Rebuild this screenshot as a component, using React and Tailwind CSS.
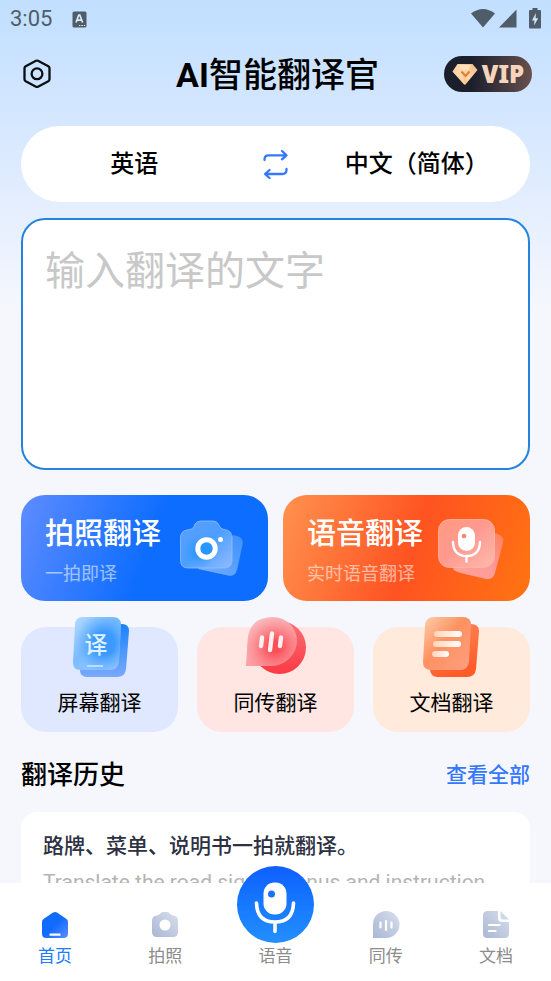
import React, { useState } from 'react';

// Status bar at the top of the screen
const StatusBar = () => (
  <div className="flex h-9 items-center justify-between px-[10px] pt-[2px] text-[#4f5d6b]">
    <div className="flex items-center gap-5">
      <span className="font-[Roboto] text-[22px] leading-8">3:05</span>
      <svg width="15" height="17" viewBox="0 0 15 17" aria-hidden="true">
        <rect x="0.5" y="0.5" width="14" height="16" rx="1.5" fill="#4f5d6b" />
        <path d="M4 11.5 6.8 4h1L10.6 11.5M5 9.2h4.700" fill="none" stroke="#dcebfa" strokeWidth="1.7" />
        <path d="M7 14.5h1.400M9.400 14.500h1.400M11.800 14.500h1.400" stroke="#dcebfa" strokeWidth="1.2" />
      </svg>
    </div>
    <div className="flex items-center pb-[2px]">
      <svg width="24" height="19" viewBox="0 0 24 19" aria-hidden="true">
        <path d="M0 4.5Q12-4.500 24 4.500L12 18.500Z" fill="#4f5d6b" />
      </svg>
      <svg className="ml-1" width="18" height="19" viewBox="0 0 18 19" aria-hidden="true">
        <path d="M17.5.5V18.500H0Z" fill="#4f5d6b" />
      </svg>
      <svg className="ml-3" width="12" height="21" viewBox="0 0 12 21" aria-hidden="true">
        <path d="M3.500 0h5v2H11a1 1 0 0 1 1 1v16.500a1 1 0 0 1-1 1H1a1 1 0 0 1-1-1V3a1 1 0 0 1 1-1h2.500Z" fill="#4f5d6b" />
        <path d="M7 5 3 12.500h2.500L5 17.500l4.200-7.200H6.500Z" fill="#d4e8fc" />
      </svg>
    </div>
  </div>
);

const SettingsIcon = () => (
  <svg width="30" height="30" viewBox="0 0 30 30" fill="none" stroke="#0b0f14" strokeWidth="2.3" strokeLinejoin="round" aria-hidden="true">
    <path d="M13 1.800Q14 1.400 15 1.800L25.300 7.200Q26.500 8 26.500 9.300V20.300Q26.500 21.600 25.300 22.300L15 27.700Q14 28.100 13 27.700L2.700 22.300Q1.500 21.600 1.500 20.300V9.300Q1.500 8 2.700 7.200Z" />
    <circle cx="14" cy="14.8" r="5.4" />
  </svg>
);

const DiamondIcon = () => (
  <svg width="26" height="22" viewBox="0 0 26 22" aria-hidden="true">
    <defs>
      <linearGradient id="gem" x1="0" y1="1" x2="1" y2="0">
        <stop offset="0" stopColor="#f8a866" />
        <stop offset="0.5" stopColor="#ffd8aa" />
        <stop offset="1" stopColor="#f9b682" />
      </linearGradient>
    </defs>
    <path d="M5.500 1h15L25.500 7 13.500 21.500Q12.500 22 11.500 21L.5 8.500Z" fill="url(#gem)" />
    <path d="M7 2h12l-2.500 5h-7Z" fill="#ffe6c8" opacity="0.8" />
    <path d="M.5 8.500 9 8 13 21.500Z" fill="#ffe0bb" opacity="0.6" />
    <path d="m9.500 8.500 4 4.500 4-4.500" fill="none" stroke="#e57b2c" strokeWidth="2" />
  </svg>
);

const SwapIcon = () => (
  <svg width="26" height="30" viewBox="0 0 26 30" fill="none" stroke="#3478ff" strokeWidth="2.3" strokeLinecap="round" strokeLinejoin="round" aria-hidden="true">
    <path d="M1.500 11V10.500Q1.500 6.300 5.500 6.300H23M19 2l4.500 4.300-4.500 4" />
    <path d="M23.500 20v.5Q23.500 25 19.500 25H2.500M6.500 21 2 25l4.500 4" />
  </svg>
);

const CameraArt = () => (
  <svg width="64" height="60" viewBox="0 0 64 60" aria-hidden="true">
    <defs>
      <linearGradient id="camBack" x1="0" y1="1" x2="1" y2="0">
        <stop offset="0" stopColor="#78b0ff" />
        <stop offset="1" stopColor="#3c91ff" />
      </linearGradient>
      <linearGradient id="camBody" x1="0" y1="0" x2="1" y2="1">
        <stop offset="0" stopColor="#5b9eff" />
        <stop offset="0.5" stopColor="#4b9fff" />
        <stop offset="1" stopColor="#91bbff" />
      </linearGradient>
      <radialGradient id="camGlow">
        <stop offset="0" stopColor="#1e8fff" />
        <stop offset="1" stopColor="#3b9aff" stopOpacity="0" />
      </radialGradient>
    </defs>
    <path d="M18 49 53 15 57 16Q64 18 62.500 25L57 50Q55 57 48 55.500Z" fill="url(#camBack)" />
    <path d="M7 10Q12 9.500 13.500 7.500L15 4Q17 1 21 1H33Q37 1 39 5 40 9 44 9.500 52 10 52 18V40Q52 48 44 48H8Q.5 48 .5 40V18Q.5 11 7 10Z" fill="url(#camBody)" stroke="#94bfff" strokeWidth="0.8" />
    <circle cx="20" cy="31" r="17" fill="url(#camGlow)" />
    <circle cx="26.5" cy="28.500" r="8.700" fill="#2997ff" stroke="#fff" strokeWidth="5" />
    <circle cx="40.5" cy="19.500" r="2.500" fill="#fff" />
  </svg>
);

const VoiceArt = () => (
  <svg width="68" height="62" viewBox="0 0 68 62" aria-hidden="true">
    <defs>
      <linearGradient id="voiceBack" x1="0" y1="1" x2="1" y2="0">
        <stop offset="0" stopColor="#ffa49a" />
        <stop offset="0.5" stopColor="#ff9a98" />
        <stop offset="1" stopColor="#ff815c" />
      </linearGradient>
      <linearGradient id="voiceBody" x1="0" y1="0" x2="1" y2="1">
        <stop offset="0" stopColor="#ff9a80" />
        <stop offset="0.45" stopColor="#ff9990" />
        <stop offset="1" stopColor="#ffbaab" />
      </linearGradient>
    </defs>
    <path d="M15 50 56 14 60 15Q67 18 65 24L57 54Q55 61 48 60L23 54Q16 52 15 50Z" fill="url(#voiceBack)" />
    <rect x="0.5" y="0.5" width="56" height="48" rx="11" fill="url(#voiceBody)" stroke="#ffb7a5" strokeWidth="0.8" />
    <rect x="20" y="8" width="17" height="24" rx="8.5" fill="#fff" />
    <circle cx="26" cy="17" r="2.300" fill="#ff8176" />
    <path d="M15 23Q15.500 37 28.500 37 41.500 37 42 23M28.500 37V42.500" fill="none" stroke="#fff" strokeWidth="2.400" strokeLinecap="round" />
  </svg>
);

const ScreenArt = () => (
  <svg width="58" height="62" viewBox="0 0 58 62" aria-hidden="true">
    <defs>
      <linearGradient id="scrBack" x1="0" y1="0" x2="0" y2="1">
        <stop offset="0" stopColor="#1a83fb" />
        <stop offset="1" stopColor="#78a9ff" />
      </linearGradient>
      <linearGradient id="scrFront" x1="0" y1="0" x2="0.8" y2="1">
        <stop offset="0" stopColor="#b4dcff" />
        <stop offset="0.5" stopColor="#7cbcff" />
        <stop offset="1" stopColor="#9cc8ff" />
      </linearGradient>
      <radialGradient id="scrGlow" cx="0.65" cy="0.5" r="0.6">
        <stop offset="0.35" stopColor="#3b99ff" />
        <stop offset="1" stopColor="#5cacff" stopOpacity="0" />
      </radialGradient>
    </defs>
    <path d="M17 8H51Q58 8 58 15L55 53Q54 61 46 61H16Q9 61 9 54Z" fill="url(#scrBack)" />
    <path d="M12 1H42Q50 1 50 9L48 45Q47 54 39 54H9Q2 54 2 46L4 9Q4 1 12 1Z" fill="url(#scrFront)" />
    <path d="M12 1H42Q50 1 50 9L48 45Q47 54 39 54H9Q2 54 2 46L4 9Q4 1 12 1Z" fill="url(#scrGlow)" />
    <text x="13.5" y="36.5" fontSize="23" fontWeight="500" fontFamily="'Noto Sans CJK SC', sans-serif" fill="#dff2ff">译</text>
    <path d="M16 50H32" stroke="#b8dfff" strokeWidth="2" />
  </svg>
);

const BubbleArt = () => (
  <svg width="62" height="60" viewBox="0 0 62 60" aria-hidden="true">
    <defs>
      <linearGradient id="bubBack" x1="0" y1="0" x2="0" y2="1">
        <stop offset="0" stopColor="#fb7077" />
        <stop offset="1" stopColor="#fa3a43" />
      </linearGradient>
      <linearGradient id="bubFront" x1="0" y1="0" x2="0.6" y2="1">
        <stop offset="0" stopColor="#f8c1c5" />
        <stop offset="1" stopColor="#fb9499" />
      </linearGradient>
      <radialGradient id="bubGlow" cx="0.56" cy="0.6" r="0.6">
        <stop offset="0.2" stopColor="#fb4f58" />
        <stop offset="1" stopColor="#fc7f87" stopOpacity="0" />
      </radialGradient>
    </defs>
    <circle cx="34.5" cy="31.5" r="26.5" fill="url(#bubBack)" />
    <path d="M1 50 2.500 25Q4 1 28 1A24 24 0 0 1 52 24 26 26 0 0 1 25 50Z" fill="url(#bubFront)" />
    <path d="M1 50 2.500 25Q4 1 28 1A24 24 0 0 1 52 24 26 26 0 0 1 25 50Z" fill="url(#bubGlow)" />
    <path d="m17 21.500-1 8.500M27 17.500l-2 16.500M36 21.500l-1 8.500" stroke="#ffeff0" strokeWidth="4.4" strokeLinecap="round" />
  </svg>
);

const DocumentArt = () => (
  <svg width="58" height="62" viewBox="0 0 58 62" aria-hidden="true">
    <defs>
      <linearGradient id="docBack" x1="0" y1="0" x2="0.4" y2="1">
        <stop offset="0" stopColor="#fd8d62" />
        <stop offset="1" stopColor="#ff5c28" />
      </linearGradient>
      <linearGradient id="docFront" x1="0" y1="0" x2="1" y2="1">
        <stop offset="0" stopColor="#fbd0ad" />
        <stop offset="0.45" stopColor="#fe9161" />
        <stop offset="1" stopColor="#fd9f81" />
      </linearGradient>
      <linearGradient id="docLine">
        <stop offset="0" stopColor="#ffd4b8" />
        <stop offset="1" stopColor="#fff" />
      </linearGradient>
    </defs>
    <path d="M15 8H48Q56 8 56 15L53 53Q52 61 44 61H14Q7 60 7 53Z" fill="url(#docBack)" />
    <path d="M11 1H40Q48 1 48 9L46 45Q45 54 37 54H8Q0 54 0 46L2 9Q3 1 11 1Z" fill="url(#docFront)" />
    <rect x="11" y="15" width="28" height="6" rx="3" fill="url(#docLine)" />
    <rect x="10" y="25" width="28" height="6" rx="3" fill="url(#docLine)" />
    <rect x="9" y="35" width="17" height="6" rx="3" fill="url(#docLine)" />
  </svg>
);

const HomeIcon = () => (
  <svg width="28" height="28" viewBox="0 0 28 28" aria-hidden="true">
    <defs>
      <linearGradient id="homeFill" x1="0" y1="0" x2="1" y2="1">
        <stop offset="0.5" stopColor="#116bff" />
        <stop offset="1" stopColor="#5c8dff" />
      </linearGradient>
    </defs>
    <path d="M12 1.500Q14 .300 16 1.500L25.500 8Q27 9.200 27 11V22.500Q27 27 22.500 27H5.500Q1 27 1 22.500V11Q1 9.200 2.500 8Z" fill="url(#homeFill)" />
    <rect x="8.5" y="22.500" width="11" height="2.300" rx="0.5" fill="#fff" />
  </svg>
);

// Shared grey gradient for the inactive tabs
const GreyFill = ({ id }) => (
  <defs>
    <linearGradient id={id} x1="0" y1="1" x2="1" y2="0">
      <stop offset="0" stopColor="#a9b7d4" />
      <stop offset="1" stopColor="#d8dfec" />
    </linearGradient>
  </defs>
);

const PhotoIcon = () => (
  <svg width="28" height="28" viewBox="0 0 28 28" aria-hidden="true">
    <GreyFill id="photoFill" />
    <path d="M6 4.500 9 3Q10 1 12 1h4q2 0 3 2l3 1.500q5 .500 5 5V21q0 5-5 5H6q-5 0-5-5V9.500Q1 5 6 4.500Z" fill="url(#photoFill)" />
    <circle cx="14" cy="14" r="5.500" fill="#fff" />
  </svg>
);

const InterpretIcon = () => (
  <svg width="28" height="28" viewBox="0 0 28 28" aria-hidden="true">
    <GreyFill id="interpretFill" />
    <path d="M1 27V13A13 13 0 0 1 14 0 13.300 13.300 0 0 1 14 27Z" fill="url(#interpretFill)" />
    <path d="M8.500 11.500v5M14 10v9M19.500 11.500v5" stroke="#fff" strokeWidth="2.200" strokeLinecap="round" />
  </svg>
);

const FileIcon = () => (
  <svg width="28" height="28" viewBox="0 0 28 28" aria-hidden="true">
    <GreyFill id="fileFill" />
    <path d="M5.500 0H16V7q0 4 4 4h7V22.500Q27 27 22.500 27H5.500Q1 27 1 22.500V4.500Q1 0 5.500 0Z" fill="url(#fileFill)" />
    <path d="M18.500 0 27 8.500H21q-2.500 0-2.500-2.500Z" fill="#cfd8e8" />
    <path d="M7 14h10.500M7 20h6.500" stroke="#fff" strokeWidth="2.200" strokeLinecap="round" />
  </svg>
);

const MicIcon = () => (
  <svg width="76" height="76" viewBox="0 0 76 76" aria-hidden="true">
    <rect x="26.5" y="15.500" width="23" height="32" rx="11" fill="#fff" />
    <circle cx="34.5" cy="27" r="3.500" fill="#1a73ff" />
    <path d="M19.500 36Q20 55 38 55 56 55 56.500 36M38 55V64.500" fill="none" stroke="#fff" strokeWidth="3.600" strokeLinecap="round" />
  </svg>
);

const features = [
  { label: '屏幕翻译', art: <ScreenArt />, color: 'bg-[#e0e8ff]' },
  { label: '同传翻译', art: <BubbleArt />, color: 'bg-[#ffe6e2]' },
  { label: '文档翻译', art: <DocumentArt />, color: 'bg-[#ffeadb]' },
];

const tabs = [
  { label: '首页', icon: <HomeIcon /> },
  { label: '拍照', icon: <PhotoIcon /> },
  { label: '语音', icon: null },
  { label: '同传', icon: <InterpretIcon /> },
  { label: '文档', icon: <FileIcon /> },
];

// Large gradient button with a title, a subtitle and artwork
const ActionCard = ({ title, subtitle, art, className }) => (
  <button type="button" className={`flex h-[106px] flex-1 items-center justify-between rounded-3xl px-6 pt-1 text-left ${className}`}>
    <span className="flex flex-col pt-1">
      <span className="text-[29px] font-medium leading-10 text-white">{title}</span>
      <span className="mt-1 text-lg leading-8 text-white/55">{subtitle}</span>
    </span>
    {art}
  </button>
);

const App = () => {
  const [text, setText] = useState('');
  const [languages, setLanguages] = useState(['英语', '中文（简体）']);
  const [activeTab, setActiveTab] = useState('首页');

  return (
    <div className="flex h-screen flex-col overflow-hidden bg-[#f6f7fd] bg-[linear-gradient(180deg,#c1dfff_0px,#d5e7ff_120px,#f6f7fd_310px)] font-[Roboto,'Noto_Sans_CJK_SC',sans-serif] text-black">
      <StatusBar />

      <main className="min-h-0 flex-1 overflow-hidden px-[21px]">
        {/* Header */}
        <header className="-mr-[2px] ml-[2px] grid h-[76px] grid-cols-[88px_1fr_88px] items-center">
          <button type="button" aria-label="设置" className="w-fit">
            <SettingsIcon />
          </button>
          <h1 className="pt-[2px] text-center text-[34px] font-medium leading-[50px]">
            <span className="font-bold">AI</span>智能翻译官
          </h1>
          <button type="button" className="flex h-9 items-center justify-center gap-1 rounded-full bg-linear-to-r from-[#1b1e2b] from-30% to-[#68504e] font-['Noto_Sans'] text-2xl font-black text-[#f5d4bb]">
            <DiamondIcon />
            VIP
          </button>
        </header>

        {/* Language switch */}
        <div className="mt-[14px] grid h-[76px] grid-cols-[1fr_56px_1fr] items-center rounded-full bg-white text-2xl font-medium">
          <button type="button">{languages[0]}</button>
          <button type="button" aria-label="切换语言" className="flex justify-center" onClick={() => setLanguages([languages[1], languages[0]])}>
            <SwapIcon />
          </button>
          <button type="button" className="whitespace-nowrap">{languages[1]}</button>
        </div>

        <textarea
          aria-label="输入翻译的文字"
          placeholder="输入翻译的文字"
          value={text}
          onChange={(e) => setText(e.target.value)}
          className="mt-4 block h-[252px] w-full resize-none rounded-3xl border-2 border-[#2583e0] bg-white px-[22px] py-[22px] text-[40px] leading-[60px] outline-none placeholder:text-[#c8c8c8]"
        />

        <div className="mt-[25px] flex gap-[15px]">
          <ActionCard
            title="拍照翻译"
            subtitle="一拍即译"
            art={<CameraArt />}
            className="bg-[linear-gradient(110deg,#5f8cff_0%,#0d6dff_52%)]"
          />
          <ActionCard
            title="语音翻译"
            subtitle="实时语音翻译"
            art={<VoiceArt />}
            className="bg-[linear-gradient(110deg,#ff924f_0%,#ff5321_52%,#ff7411_100%)]"
          />
        </div>

        <div className="mt-[26px] grid grid-cols-3 gap-[19px]">
          {features.map((feature) => (
            <button key={feature.label} type="button" className={`flex h-[105px] flex-col items-center rounded-[25px] ${feature.color}`}>
              <span className="-mt-[11px] flex h-16 items-start">{feature.art}</span>
              <span className="mt-[7px] text-[21px] leading-8">{feature.label}</span>
            </button>
          ))}
        </div>

        {/* Translation history */}
        <section>
          <div className="mt-[25px] flex items-center justify-between">
            <h2 className="text-[26px] font-medium leading-9">翻译历史</h2>
            <a href="#history" className="text-[21px] font-medium leading-8 text-[#3478ff]">查看全部</a>
          </div>
          <article className="mt-[19px] h-40 rounded-2xl bg-white px-[22px] py-4">
            <p className="text-[21px] font-medium leading-9 text-[#2d3142]">路牌、菜单、说明书一拍就翻译。</p>
            <p className="whitespace-nowrap text-[21px] leading-9 text-[#b4b4b4]">Translate the road signs, menus and instruction</p>
          </article>
        </section>
      </main>

      {/* Bottom tabs */}
      <nav className="grid h-[98px] shrink-0 grid-cols-5 bg-white">
        {tabs.map((tab) => (
          <button
            key={tab.label}
            type="button"
            onClick={() => setActiveTab(tab.label)}
            className={`flex flex-col items-center pt-7 text-[17px] leading-6 ${activeTab === tab.label ? 'text-[#217aff]' : 'text-[#8c8c8c]'}`}
          >
            {tab.icon ? (
              tab.icon
            ) : (
              <span className="relative -mt-[45px] flex size-[77px] shrink-0 items-center justify-center rounded-full bg-linear-to-b from-[#115fff] to-[#248fff]">
                <MicIcon />
              </span>
            )}
            <span className={tab.icon ? 'mt-[5px]' : 'mt-px'}>{tab.label}</span>
          </button>
        ))}
      </nav>
    </div>
  );
};

export default App;
